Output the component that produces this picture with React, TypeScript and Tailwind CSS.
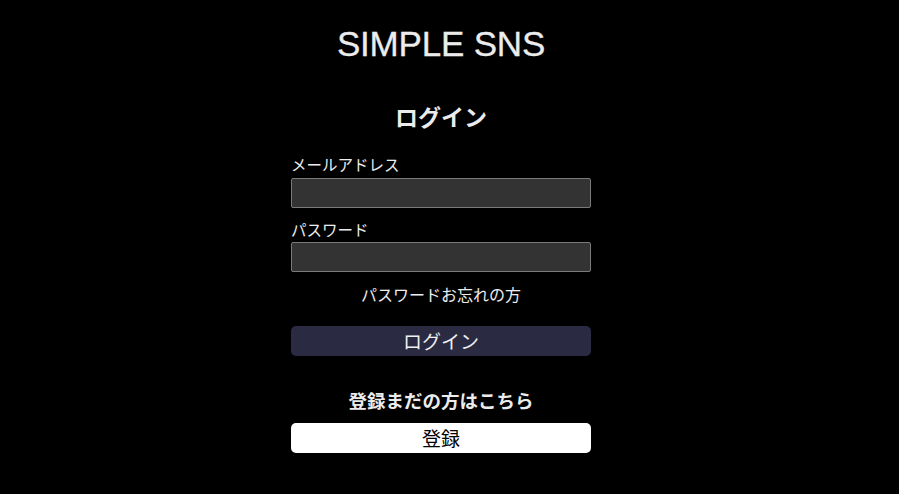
import React from 'react'

const jp = "font-['Noto_Sans_CJK_JP','Noto_Sans',sans-serif]"

export default function App() {
  return (
    <div className={`min-h-[494px] w-full bg-black text-[#ececec] ${jp}`}>
      <div className="w-[882px] flex flex-col items-center pt-[22px]">
        <h1 className="text-[35px] leading-[44px] font-['Liberation_Sans','Noto_Sans',sans-serif] tracking-[-0.2px] [-webkit-text-stroke:0.3px_#ececec]">
          SIMPLE SNS
        </h1>
        <h2 className="mt-[35px] text-[23px] leading-[31px] font-bold">ログイン</h2>
        <form className="mt-[22px] w-[300px] flex flex-col" onSubmit={e => e.preventDefault()}>
          <label className="text-[15.5px] leading-[20px]">メールアドレス</label>
          <input
            type="email"
            className="mt-[4px] h-[30px] w-full rounded-[2px] border border-[#7a7a7a] bg-[#333333] px-2 text-white outline-none"
          />
          <label className="mt-[10px] text-[15.5px] leading-[22px]">パスワード</label>
          <input
            type="password"
            className="mt-[2px] h-[30px] w-full rounded-[2px] border border-[#7a7a7a] bg-[#333333] px-2 text-white outline-none"
          />
          <a className="mt-[11px] text-center text-[16px] leading-[22px] cursor-pointer">パスワードお忘れの方</a>
          <button
            type="submit"
            className="mt-[21px] h-[30px] w-full rounded-[5px] bg-[#2a2a42] text-[19px] leading-[30px] text-[#f0f0f0]"
          >
            ログイン
          </button>
          <p className="mt-[32px] text-center text-[18.5px] leading-[24px] font-bold">登録まだの方はこちら</p>
          <button
            type="button"
            className="mt-[11px] h-[30px] w-full rounded-[5px] bg-white text-[19px] leading-[30px] text-black"
          >
            登録
          </button>
        </form>
      </div>
    </div>
  )
}
